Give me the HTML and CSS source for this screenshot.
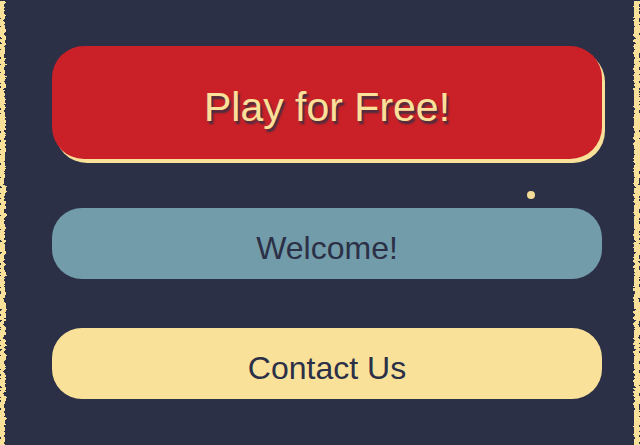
FILE: index.html
```html
<!DOCTYPE html>
<html>
<head>
<meta charset="utf-8">
<link rel="stylesheet" href="styles.css">
</head>
<body>
<div class="page">
  <div class="edge edge-left"></div>
  <main class="main">
    <a class="btn btn-play" href="#">Play for Free!</a>
    <a class="btn btn-welcome" href="#">Welcome!</a>
    <a class="btn btn-contact" href="#">Contact Us</a>
    <span class="spark"></span>
  </main>
  <div class="edge edge-right"></div>
</div>
<svg class="defs" width="0" height="0" aria-hidden="true">
  <filter id="rough" x="-300%" y="-5%" width="700%" height="110%">
    <feTurbulence type="fractalNoise" baseFrequency="0.08 0.35" numOctaves="2" seed="7" result="n"/>
    <feDisplacementMap in="SourceGraphic" in2="n" scale="6" xChannelSelector="R" yChannelSelector="G"/>
    <feGaussianBlur stdDeviation="0.6"/>
  </filter>
</svg>
</body>
</html>
```
FILE: styles.css
```css
* { box-sizing: border-box; }
html, body {
  margin: 0;
  padding: 0;
  height: 100%;
}
body {
  background: #2b3047;
  font-family: "Liberation Sans", Arial, sans-serif;
  overflow: hidden;
}
.page {
  display: flex;
  height: 445px;
  width: 640px;
  background: #2b3047;
}
.edge {
  width: 5px;
  background: #f9e19a;
  filter: url(#rough);
  flex: none;
}
.edge-right { width: 6px; }
.main {
  position: relative;
  flex: 1;
  display: flex;
  flex-direction: column;
  padding: 46px 29px 0 47px;
}
.btn {
  display: flex;
  align-items: center;
  justify-content: center;
  text-decoration: none;
  width: 550px;
  flex: none;
}
.btn-play {
  height: 113px;
  border-radius: 32px;
  background: #c92127;
  color: #f9e19a;
  font-size: 41px;
  box-shadow: 3px 4px 0 #f9e19a;
  text-shadow: 2px 3px 2px rgba(43, 48, 71, 0.85);
  padding-top: 10px;
}
.btn-welcome {
  margin-top: 49px;
  height: 71px;
  border-radius: 30px;
  background: #729ca9;
  color: #2b3047;
  font-size: 32px;
  padding-top: 10px;
}
.btn-contact {
  margin-top: 49px;
  height: 71px;
  border-radius: 30px;
  background: #f9e19a;
  color: #2b3047;
  font-size: 32px;
  padding-top: 10px;
}
.spark {
  position: absolute;
  left: 522px;
  top: 191px;
  width: 8px;
  height: 8px;
  border-radius: 50%;
  background: #f3dc96;
  filter: blur(0.7px);
}
.defs { position: absolute; width: 0; height: 0; }
```
